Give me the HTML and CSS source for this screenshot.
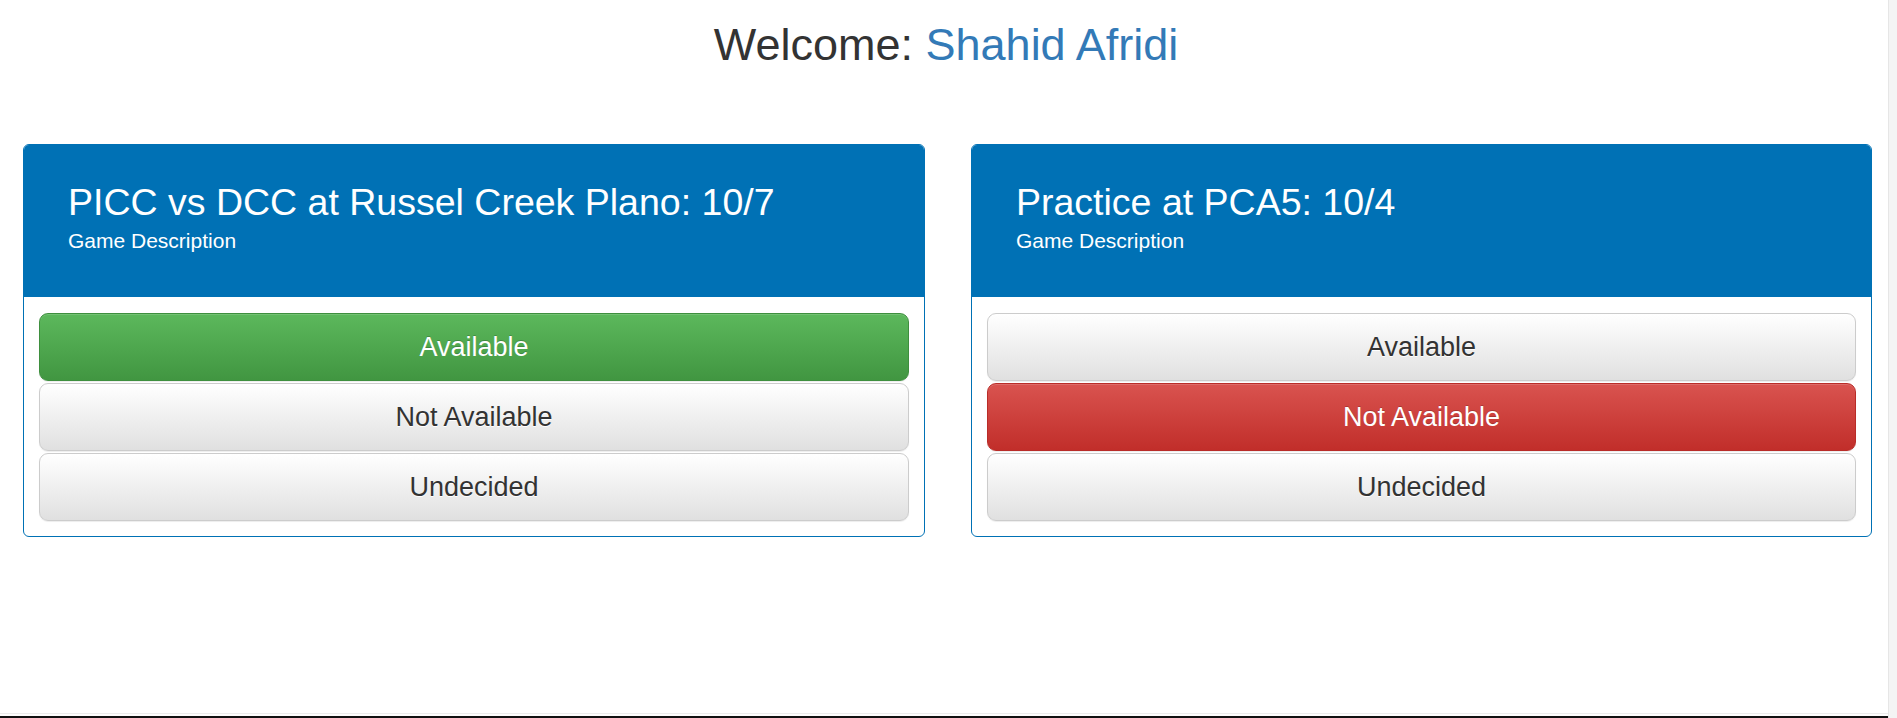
FILE: index.html
```html
<!DOCTYPE html>
<html lang="en">
<head>
<meta charset="utf-8">
<title>Welcome</title>
<link rel="stylesheet" href="styles.css">
</head>
<body>
<div class="viewport">
  <div class="page">
    <main class="content">
      <h1 class="welcome">Welcome: <span class="user">Shahid Afridi</span></h1>
      <div class="cards">
        <section class="card">
          <header class="card-head">
            <h2 class="card-title">PICC vs DCC at Russel Creek Plano: 10/7</h2>
            <p class="card-sub">Game Description</p>
          </header>
          <div class="card-body">
            <button class="btn btn-success">Available</button>
            <button class="btn">Not Available</button>
            <button class="btn">Undecided</button>
          </div>
        </section>
        <section class="card">
          <header class="card-head">
            <h2 class="card-title">Practice at PCA5: 10/4</h2>
            <p class="card-sub">Game Description</p>
          </header>
          <div class="card-body">
            <button class="btn">Available</button>
            <button class="btn btn-danger">Not Available</button>
            <button class="btn">Undecided</button>
          </div>
        </section>
      </div>
    </main>
    <div class="bottom-rule"></div>
  </div>
  <div class="scrollbar"></div>
</div>
</body>
</html>
```
FILE: styles.css
```css
* { box-sizing: border-box; }
html, body { margin: 0; padding: 0; height: 100%; }
body {
  font-family: "Liberation Sans", Arial, sans-serif;
  font-size: 21px;
  color: #333;
  background: #fff;
  overflow: hidden;
}
.viewport {
  display: flex;
  height: 100vh;
}
.page {
  flex: 1;
  display: flex;
  flex-direction: column;
  min-width: 0;
}
.content {
  flex: 1;
}
.scrollbar {
  width: 9px;
  background: #f4f4f4;
  border-left: 1px solid #e6e6e6;
}
.bottom-rule {
  height: 5px;
  border-top: 1px solid #ececec;
  border-bottom: 2px solid #111;
  background: #fdfdfd;
}
.welcome {
  margin: 20px 0 0;
  font-size: 45px;
  font-weight: 400;
  line-height: 1.1;
  text-align: center;
  color: #333;
  padding-left: 4px;
}
.user { color: #337ab7; }
.cards {
  display: grid;
  grid-template-columns: 902px 901px;
  column-gap: 46px;
  margin: 74px 0 0 23px;
}
.card {
  border: 1px solid #0071b5;
  border-radius: 6px;
  background: #fff;
  overflow: hidden;
}
.card-head {
  background: #0071b5;
  color: #fff;
  padding: 37px 20px 40px 44px;
  height: 152px;
}
.card-title {
  margin: 0;
  font-size: 37.5px;
  font-weight: 400;
  line-height: 1.1;
}
.card-sub {
  margin: 3px 0 0;
  font-size: 21px;
  line-height: 30px;
}
.card-body {
  display: flex;
  flex-direction: column;
  gap: 2px;
  padding: 16px 15px 15px;
}
.btn {
  display: flex;
  align-items: center;
  justify-content: center;
  height: 68px;
  width: 100%;
  font-family: "Liberation Sans", Arial, sans-serif;
  font-size: 27px;
  color: #333;
  text-shadow: 0 1px 0 #fff;
  background: linear-gradient(to bottom, #fff 0%, #e0e0e0 100%);
  border: 1px solid #ccc;
  border-radius: 9px;
  box-shadow: inset 0 1px 0 rgba(255,255,255,.15), 0 1px 1px rgba(0,0,0,.075);
  padding: 2px 0 0;
  cursor: pointer;
}
.btn-success {
  color: #fff;
  text-shadow: 0 -1px 0 rgba(0,0,0,.2);
  background: linear-gradient(to bottom, #5cb85c 0%, #419641 100%);
  border-color: #3e8f3e;
}
.btn-danger {
  color: #fff;
  text-shadow: 0 -1px 0 rgba(0,0,0,.2);
  background: linear-gradient(to bottom, #d9534f 0%, #c12e2a 100%);
  border-color: #b92c28;
}
```
